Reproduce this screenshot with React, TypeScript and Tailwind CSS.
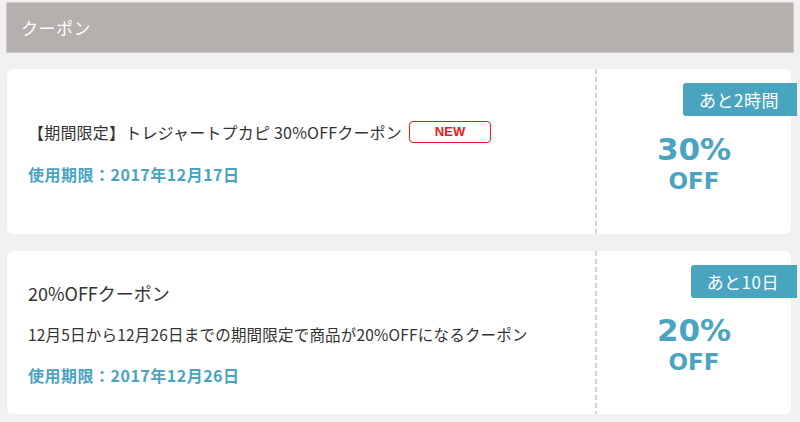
import React from 'react'

const jp = "font-['Noto_Sans_CJK_JP','Noto_Sans',sans-serif]"

type Coupon = {
  title: string
  isNew?: boolean
  desc?: string
  expiry: string
  remain: string
  percent: string
  h: string
  titleCls: string
}

const coupons: Coupon[] = [
  {
    title: '【期間限定】トレジャートプカピ 30%OFFクーポン',
    isNew: true,
    expiry: '使用期限：2017年12月17日',
    remain: 'あと2時間',
    percent: '30%',
    h: 'h-[165px]',
    titleCls: 'text-[16px] tracking-[0.2px]',
  },
  {
    title: '20%OFFクーポン',
    desc: '12月5日から12月26日までの期間限定で商品が20%OFFになるクーポン',
    expiry: '使用期限：2017年12月26日',
    remain: 'あと10日',
    percent: '20%',
    h: 'h-[163px]',
    titleCls: 'text-[18px]',
  },
]

function CouponCard({ c }: { c: Coupon }) {
  return (
    <div className={`relative flex bg-white rounded-[6px] mr-[3px] ${c.h}`}>
      <div className="flex-1 flex flex-col justify-center pl-[21px] pt-[2px] gap-[19px]">
        <div className="flex items-center">
          <span className={`leading-[24px] text-[#333] ${c.titleCls}`}>{c.title}</span>
          {c.isNew && (
            <span className="ml-[7px] w-[82px] h-[22px] flex items-center justify-center border-[1.5px] border-[#f01818] rounded-[4px] text-[#f01818] text-[13px] font-bold font-['Liberation_Sans',sans-serif]">
              NEW
            </span>
          )}
        </div>
        {c.desc && (
          <div className="text-[15.5px] leading-[22px] text-[#333] tracking-[0.2px] -mt-[1px]">{c.desc}</div>
        )}
        <div className="text-[16px] leading-[22px] font-bold text-[#4aa4c1] tracking-[0.5px]">{c.expiry}</div>
      </div>
      <div className="w-[2px] bg-[repeating-linear-gradient(to_bottom,#ddd2d2_0px,#ddd2d2_5px,transparent_5px,transparent_8px)]" />
      <div className="w-[194px] flex flex-col items-center justify-center pt-[24px] text-[#4aa4c1] font-['DejaVu_Sans',sans-serif] font-bold">
        <div className="text-[31px] leading-[34px]">{c.percent}</div>
        <div className="text-[23px] leading-[30px]">OFF</div>
      </div>
      <div className="absolute top-[14px] -right-[6px] h-[33px] flex items-center pl-4 pr-[18px] bg-[#49a4c0] text-white text-[17px] tracking-[0.5px] rounded-l-[3px]">
        {c.remain}
      </div>
    </div>
  )
}

export default function App() {
  return (
    <div className={`w-[800px] h-[422px] overflow-hidden bg-[#f1f1f1] pt-[2px] px-[6px] ${jp}`}>
      <div className="h-[51px] bg-[#b5afad] border border-[#cfcac9] flex items-center pl-[14px]">
        <h1 className="text-white text-[17px] tracking-[0.5px]">クーポン</h1>
      </div>
      <div className="flex flex-col gap-[17px] mt-[16px] pl-[1px]">
        {coupons.map((c, i) => (
          <CouponCard key={i} c={c} />
        ))}
      </div>
    </div>
  )
}
